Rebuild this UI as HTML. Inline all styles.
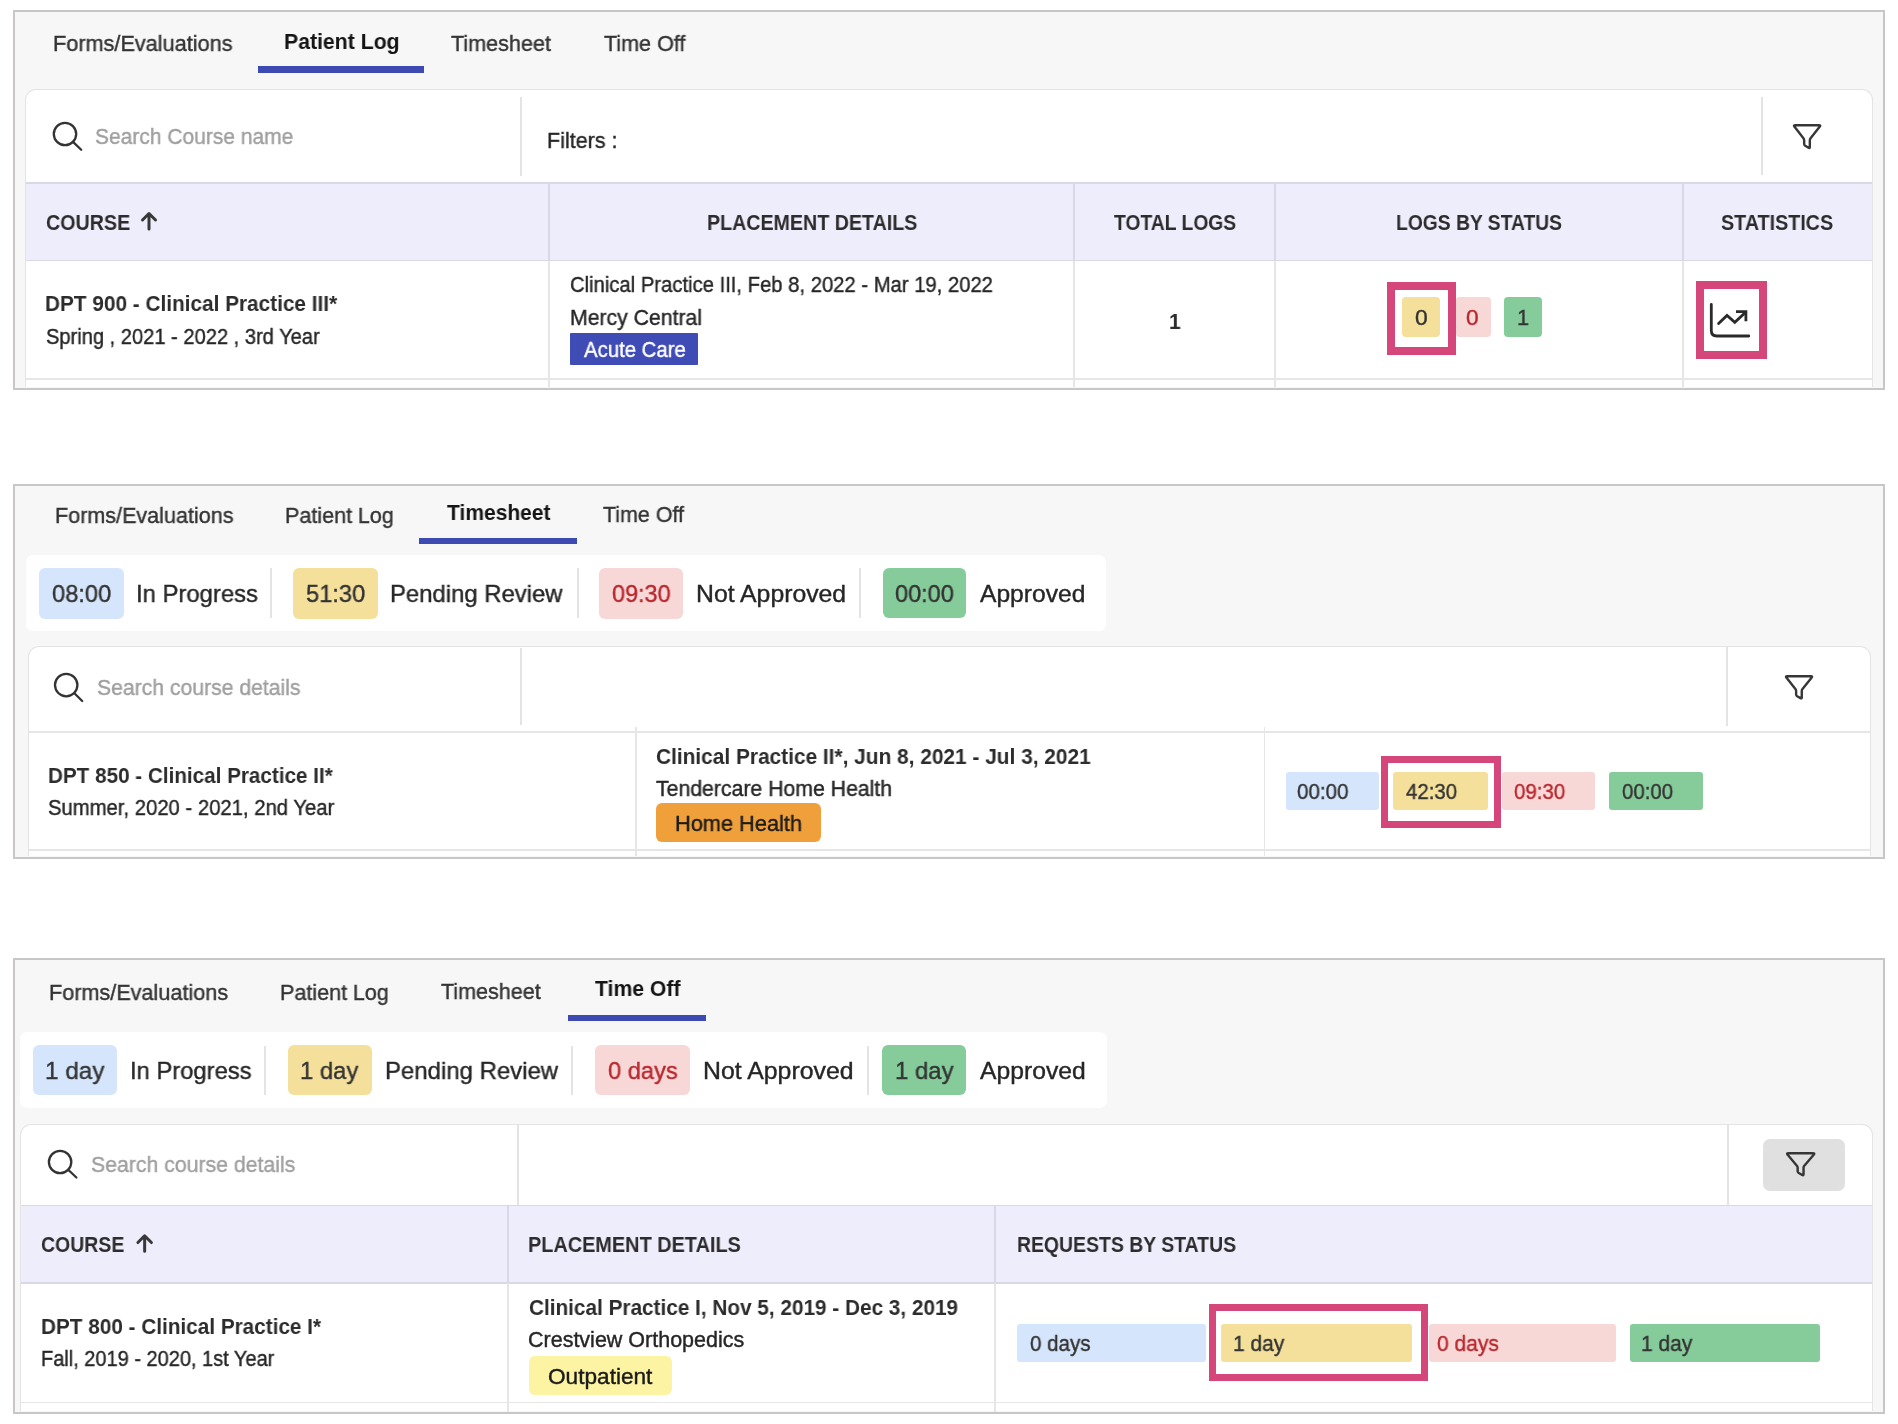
<!DOCTYPE html>
<html><head><meta charset="utf-8">
<style>
html,body{margin:0;padding:0;background:#ffffff;width:1898px;height:1424px;overflow:hidden;position:relative;}
body{font-family:"Liberation Sans",sans-serif;}
.a{position:absolute;box-sizing:border-box;}
.t{position:absolute;white-space:nowrap;line-height:1;transform-origin:0 0;-webkit-text-stroke:0.4px currentColor;will-change:transform;font-family:"Liberation Sans",sans-serif;}
.b{font-weight:700;-webkit-text-stroke:0;}
svg{position:absolute;overflow:visible;}
</style></head><body>
<div class="a" style="left:13.20px;top:10.00px;width:1871.80px;height:379.50px;background:#f7f7f7;border:2.5px solid #c8c6c7"></div>
<div class="a" style="left:258.00px;top:66.00px;width:166.00px;height:6.50px;background:#3d4ab2"></div>
<div class="a" style="left:25.30px;top:89.30px;width:1847.70px;height:297.70px;background:#fff;border:1.5px solid #e4e4e4;border-bottom:none;border-radius:11px 11px 0 0"></div>
<div class="a" style="left:519.50px;top:96.50px;width:2.00px;height:79.00px;background:#e4e4e4"></div>
<div class="a" style="left:1761.00px;top:97.00px;width:2.00px;height:78.00px;background:#e4e4e4"></div>
<svg style="left:0;top:0" width="1" height="1"><circle cx="65.00" cy="134.00" r="11.20" fill="none" stroke="#333" stroke-width="2.30"/><line x1="73.01" y1="141.83" x2="81.20" y2="149.80" stroke="#333" stroke-width="2.30" stroke-linecap="round"/></svg>
<svg style="left:1792.20px;top:124.30px" width="30" height="26" viewBox="0 0 30 26"><g transform="scale(1.0486 1.0040)"><path d="M3.25,1.25 H25.55 Q27.8,1.25 26.34,2.84 L17.7,14.2 Q17.0,15.1 17.0,16.3 V22.9 Q17.0,24.4 15.8,23.6 L12.6,21.6 Q11.6,20.9 11.6,19.8 V16.3 Q11.6,15.1 10.9,14.2 L2.45,2.85 Q1.0,1.25 3.25,1.25 Z" fill="none" stroke="#363636" stroke-width="2.40" stroke-linejoin="round" vector-effect="non-scaling-stroke"/></g></svg>
<div class="a" style="left:26.30px;top:183.00px;width:1845.50px;height:77.50px;background:#eeedfc"></div>
<div class="a" style="left:26.30px;top:182.40px;width:1845.50px;height:1.60px;background:#d9d8e6"></div>
<div class="a" style="left:26.30px;top:259.70px;width:1845.50px;height:1.60px;background:#d9d8e6"></div>
<div class="a" style="left:548.20px;top:183.20px;width:1.60px;height:77.30px;background:#d9d8e6"></div>
<div class="a" style="left:548.10px;top:260.50px;width:1.80px;height:126.50px;background:#e6e6e6"></div>
<div class="a" style="left:1073.00px;top:183.20px;width:1.60px;height:77.30px;background:#d9d8e6"></div>
<div class="a" style="left:1072.90px;top:260.50px;width:1.80px;height:126.50px;background:#e6e6e6"></div>
<div class="a" style="left:1274.20px;top:183.20px;width:1.60px;height:77.30px;background:#d9d8e6"></div>
<div class="a" style="left:1274.10px;top:260.50px;width:1.80px;height:126.50px;background:#e6e6e6"></div>
<div class="a" style="left:1682.00px;top:183.20px;width:1.60px;height:77.30px;background:#d9d8e6"></div>
<div class="a" style="left:1681.90px;top:260.50px;width:1.80px;height:126.50px;background:#e6e6e6"></div>
<div class="a" style="left:26.30px;top:378.10px;width:1845.50px;height:1.80px;background:#e6e6e6"></div>
<svg style="left:0;top:0" width="1" height="1"><path d="M149.00 228.90 V214.50 M142.50 220.00 L149.00 213.50 L155.50 220.00" fill="none" stroke="#383838" stroke-width="3.00" stroke-linecap="round" stroke-linejoin="round"/></svg>
<div class="a" style="left:570.00px;top:332.70px;width:127.80px;height:32.00px;background:#3f4cb6;border-radius:1px"></div>
<div class="a" style="left:1402.00px;top:297.20px;width:37.80px;height:39.40px;background:#f5e09b;border-radius:4px"></div>
<div class="a" style="left:1455.90px;top:297.20px;width:35.10px;height:39.40px;background:#f8d7d7;border-radius:4px"></div>
<div class="a" style="left:1504.40px;top:297.20px;width:37.90px;height:39.40px;background:#86cc9a;border-radius:4px"></div>
<div class="a" style="left:1387.40px;top:281.60px;width:68.20px;height:73.20px;border:8.00px solid #d5467a"></div>
<div class="a" style="left:1696.00px;top:280.90px;width:70.70px;height:77.90px;border:8.00px solid #d5467a"></div>
<svg style="left:0;top:0" width="1" height="1"><path d="M1711.3 304.5 V330.5 Q1711.3 336 1716.8 336 H1748.8" fill="none" stroke="#2a2a2a" stroke-width="2.8" stroke-linecap="round"/><path d="M1718.6 323.6 L1727 315.4 L1734.8 322.3 L1745.6 312.2" fill="none" stroke="#2a2a2a" stroke-width="2.8" stroke-linecap="round" stroke-linejoin="miter"/><path d="M1736 311.6 H1745.9 V321.3" fill="none" stroke="#2a2a2a" stroke-width="2.8" stroke-linecap="butt"/></svg>
<div class="a" style="left:13.20px;top:484.00px;width:1871.80px;height:374.50px;background:#f7f7f7;border:2.5px solid #c8c6c7"></div>
<div class="a" style="left:419.00px;top:537.50px;width:157.60px;height:6.50px;background:#3d4ab2"></div>
<div class="a" style="left:26.30px;top:554.50px;width:1080.10px;height:76.90px;background:#ffffff;border-radius:7px"></div>
<div class="a" style="left:39.40px;top:567.80px;width:84.50px;height:51.00px;background:#d5e5fb;border-radius:6px"></div>
<div class="a" style="left:293.30px;top:567.80px;width:84.60px;height:51.00px;background:#f5e09b;border-radius:6px"></div>
<div class="a" style="left:599.30px;top:567.80px;width:84.10px;height:51.00px;background:#f8d7d7;border-radius:6px"></div>
<div class="a" style="left:882.60px;top:568.30px;width:83.40px;height:50.00px;background:#86cc9a;border-radius:6px"></div>
<div class="a" style="left:270.40px;top:568.00px;width:2.00px;height:50.30px;background:#e4e4e4"></div>
<div class="a" style="left:576.60px;top:568.00px;width:2.00px;height:50.30px;background:#e4e4e4"></div>
<div class="a" style="left:858.90px;top:568.00px;width:2.00px;height:50.30px;background:#e4e4e4"></div>
<div class="a" style="left:27.50px;top:646.30px;width:1843.80px;height:209.70px;background:#fff;border:1.5px solid #e4e4e4;border-bottom:none;border-radius:11px 11px 0 0"></div>
<div class="a" style="left:519.80px;top:648.00px;width:2.00px;height:77.00px;background:#e4e4e4"></div>
<div class="a" style="left:1726.30px;top:647.00px;width:2.00px;height:79.00px;background:#e4e4e4"></div>
<svg style="left:0;top:0" width="1" height="1"><circle cx="66.20" cy="685.10" r="11.20" fill="none" stroke="#333" stroke-width="2.30"/><line x1="74.14" y1="693.00" x2="82.20" y2="701.00" stroke="#333" stroke-width="2.30" stroke-linecap="round"/></svg>
<svg style="left:1784.20px;top:674.90px" width="30" height="26" viewBox="0 0 30 26"><g transform="scale(1.0451 0.9800)"><path d="M3.25,1.25 H25.55 Q27.8,1.25 26.34,2.84 L17.7,14.2 Q17.0,15.1 17.0,16.3 V22.9 Q17.0,24.4 15.8,23.6 L12.6,21.6 Q11.6,20.9 11.6,19.8 V16.3 Q11.6,15.1 10.9,14.2 L2.45,2.85 Q1.0,1.25 3.25,1.25 Z" fill="none" stroke="#363636" stroke-width="2.40" stroke-linejoin="round" vector-effect="non-scaling-stroke"/></g></svg>
<div class="a" style="left:28.50px;top:730.80px;width:1842.00px;height:1.80px;background:#e6e6e6"></div>
<div class="a" style="left:634.90px;top:726.50px;width:1.80px;height:129.50px;background:#e6e6e6"></div>
<div class="a" style="left:1263.60px;top:726.50px;width:1.80px;height:129.50px;background:#e6e6e6"></div>
<div class="a" style="left:28.50px;top:849.10px;width:1842.00px;height:1.80px;background:#e6e6e6"></div>
<div class="a" style="left:656.40px;top:803.20px;width:164.30px;height:39.00px;background:#f0a03b;border-radius:6px"></div>
<div class="a" style="left:1285.60px;top:771.60px;width:93.20px;height:38.60px;background:#d5e5fb;border-radius:3px"></div>
<div class="a" style="left:1393.00px;top:771.60px;width:94.80px;height:38.60px;background:#f5e09b;border-radius:3px"></div>
<div class="a" style="left:1502.30px;top:771.60px;width:93.10px;height:38.60px;background:#f8d7d7;border-radius:3px"></div>
<div class="a" style="left:1609.00px;top:771.60px;width:94.10px;height:38.60px;background:#86cc9a;border-radius:3px"></div>
<div class="a" style="left:1380.80px;top:755.80px;width:120.20px;height:72.70px;border:7.60px solid #d5467a"></div>
<div class="a" style="left:13.20px;top:957.50px;width:1871.80px;height:456.30px;background:#f7f7f7;border:2.5px solid #c8c6c7"></div>
<div class="a" style="left:567.50px;top:1014.60px;width:138.10px;height:6.20px;background:#3d4ab2"></div>
<div class="a" style="left:20.30px;top:1032.20px;width:1086.60px;height:76.30px;background:#ffffff;border-radius:7px"></div>
<div class="a" style="left:32.90px;top:1045.30px;width:84.30px;height:50.10px;background:#d5e5fb;border-radius:6px"></div>
<div class="a" style="left:288.30px;top:1045.30px;width:83.90px;height:50.10px;background:#f5e09b;border-radius:6px"></div>
<div class="a" style="left:595.00px;top:1045.30px;width:95.30px;height:50.10px;background:#f8d7d7;border-radius:6px"></div>
<div class="a" style="left:882.10px;top:1045.00px;width:83.90px;height:49.80px;background:#86cc9a;border-radius:6px"></div>
<div class="a" style="left:264.40px;top:1045.50px;width:2.00px;height:49.80px;background:#e4e4e4"></div>
<div class="a" style="left:571.30px;top:1045.50px;width:2.00px;height:49.80px;background:#e4e4e4"></div>
<div class="a" style="left:866.80px;top:1045.50px;width:2.00px;height:49.80px;background:#e4e4e4"></div>
<div class="a" style="left:20.00px;top:1123.80px;width:1852.50px;height:287.70px;background:#fff;border:1.5px solid #e4e4e4;border-bottom:none;border-radius:11px 11px 0 0"></div>
<div class="a" style="left:517.00px;top:1125.00px;width:2.00px;height:80.00px;background:#e4e4e4"></div>
<div class="a" style="left:1727.30px;top:1124.70px;width:2.00px;height:80.00px;background:#e4e4e4"></div>
<svg style="left:0;top:0" width="1" height="1"><circle cx="60.10" cy="1162.00" r="11.20" fill="none" stroke="#333" stroke-width="2.30"/><line x1="68.20" y1="1169.73" x2="76.40" y2="1177.50" stroke="#333" stroke-width="2.30" stroke-linecap="round"/></svg>
<div class="a" style="left:1763.00px;top:1138.70px;width:82.00px;height:52.00px;background:#e0e0e0;border-radius:7px"></div>
<svg style="left:1784.60px;top:1152.40px" width="30" height="26" viewBox="0 0 30 26"><g transform="scale(1.0903 0.9720)"><path d="M3.25,1.25 H25.55 Q27.8,1.25 26.34,2.84 L17.7,14.2 Q17.0,15.1 17.0,16.3 V22.9 Q17.0,24.4 15.8,23.6 L12.6,21.6 Q11.6,20.9 11.6,19.8 V16.3 Q11.6,15.1 10.9,14.2 L2.45,2.85 Q1.0,1.25 3.25,1.25 Z" fill="none" stroke="#363636" stroke-width="2.40" stroke-linejoin="round" vector-effect="non-scaling-stroke"/></g></svg>
<div class="a" style="left:21.00px;top:1205.50px;width:1850.50px;height:77.50px;background:#eeedfc"></div>
<div class="a" style="left:21.00px;top:1204.70px;width:1850.50px;height:1.60px;background:#d9d8e6"></div>
<div class="a" style="left:21.00px;top:1282.20px;width:1850.50px;height:1.60px;background:#d9d8e6"></div>
<div class="a" style="left:507.40px;top:1205.50px;width:1.60px;height:77.50px;background:#d9d8e6"></div>
<div class="a" style="left:507.30px;top:1283.00px;width:1.80px;height:128.50px;background:#e6e6e6"></div>
<div class="a" style="left:994.40px;top:1205.50px;width:1.60px;height:77.50px;background:#d9d8e6"></div>
<div class="a" style="left:994.30px;top:1283.00px;width:1.80px;height:128.50px;background:#e6e6e6"></div>
<div class="a" style="left:21.00px;top:1401.70px;width:1850.50px;height:1.80px;background:#e6e6e6"></div>
<svg style="left:0;top:0" width="1" height="1"><path d="M144.65 1251.20 V1236.80 M137.90 1242.55 L144.65 1235.80 L151.40 1242.55" fill="none" stroke="#383838" stroke-width="3.00" stroke-linecap="round" stroke-linejoin="round"/></svg>
<div class="a" style="left:528.50px;top:1355.60px;width:143.30px;height:39.50px;background:#fcf3a3;border-radius:6px"></div>
<div class="a" style="left:1017.00px;top:1323.60px;width:189.30px;height:38.70px;background:#d5e5fb;border-radius:3px"></div>
<div class="a" style="left:1221.20px;top:1323.60px;width:190.60px;height:38.70px;background:#f5e09b;border-radius:3px"></div>
<div class="a" style="left:1428.80px;top:1323.60px;width:187.10px;height:38.70px;background:#f8d7d7;border-radius:3px"></div>
<div class="a" style="left:1629.50px;top:1323.60px;width:190.10px;height:38.70px;background:#86cc9a;border-radius:3px"></div>
<div class="a" style="left:1209.00px;top:1304.20px;width:218.50px;height:77.10px;border:7.60px solid #d5467a"></div>
<div class="t" style="left:53.17px;top:33.2px;font-size:22px;color:#333333;transform:scaleX(0.9853);">Forms/Evaluations</div>
<div class="t b" style="left:284.22px;top:30.7px;font-size:22px;color:#141414;transform:scaleX(0.9650);">Patient Log</div>
<div class="t" style="left:450.77px;top:33.2px;font-size:22px;color:#333333;transform:scaleX(0.9814);">Timesheet</div>
<div class="t" style="left:603.57px;top:33.2px;font-size:22px;color:#333333;transform:scaleX(0.9791);">Time Off</div>
<div class="t" style="left:95.36px;top:126.08px;font-size:22.5px;color:#9f9f9f;transform:scaleX(0.9332);">Search Course name</div>
<div class="t" style="left:547.28px;top:129.88px;font-size:22.5px;color:#262626;transform:scaleX(0.9561);">Filters :</div>
<div class="t b" style="left:45.51px;top:212.93px;font-size:21.5px;color:#2c2c2c;transform:scaleX(0.9155);">COURSE</div>
<div class="t b" style="left:706.72px;top:212.93px;font-size:21.5px;color:#2c2c2c;transform:scaleX(0.9139);">PLACEMENT DETAILS</div>
<div class="t b" style="left:1113.81px;top:212.93px;font-size:21.5px;color:#2c2c2c;transform:scaleX(0.8971);">TOTAL LOGS</div>
<div class="t b" style="left:1395.75px;top:212.93px;font-size:21.5px;color:#2c2c2c;transform:scaleX(0.8966);">LOGS BY STATUS</div>
<div class="t b" style="left:1721.21px;top:212.93px;font-size:21.5px;color:#2c2c2c;transform:scaleX(0.9173);">STATISTICS</div>
<div class="t b" style="left:45.45px;top:294.33px;font-size:21.5px;color:#2c2c2c;transform:scaleX(0.9663);">DPT 900 - Clinical Practice III*</div>
<div class="t" style="left:45.9px;top:326.83px;font-size:21.5px;color:#262626;transform:scaleX(0.9346);">Spring , 2021 - 2022 , 3rd Year</div>
<div class="t" style="left:570.29px;top:274.73px;font-size:21.5px;color:#262626;transform:scaleX(0.9413);">Clinical Practice III, Feb 8, 2022 - Mar 19, 2022</div>
<div class="t" style="left:569.6px;top:307.93px;font-size:21.5px;color:#262626;transform:scaleX(0.9866);">Mercy Central</div>
<div class="t" style="left:584px;top:339.1px;font-size:22px;color:#ffffff;transform:scaleX(0.9253);">Acute Care</div>
<div class="t b" style="left:1168.75px;top:311.53px;font-size:21.5px;color:#2c2c2c;transform:scaleX(0.9698);">1</div>
<div class="t" style="left:1415px;top:306.9px;font-size:22px;color:#333;transform:scaleX(1.0403);">0</div>
<div class="t" style="left:1465.91px;top:306.9px;font-size:22px;color:#b8292f;transform:scaleX(1.0309);">0</div>
<div class="t" style="left:1516.98px;top:306.9px;font-size:22px;color:#333;transform:scaleX(0.9822);">1</div>
<div class="t" style="left:55.18px;top:504.8px;font-size:22px;color:#333333;transform:scaleX(0.9797);">Forms/Evaluations</div>
<div class="t" style="left:284.88px;top:504.8px;font-size:22px;color:#333333;transform:scaleX(0.9778);">Patient Log</div>
<div class="t b" style="left:446.59px;top:501.7px;font-size:22px;color:#141414;transform:scaleX(0.9553);">Timesheet</div>
<div class="t" style="left:602.97px;top:504.3px;font-size:22px;color:#333333;transform:scaleX(0.9742);">Time Off</div>
<div class="t" style="left:51.87px;top:582.27px;font-size:24.5px;color:#333;transform:scaleX(0.9653);">08:00</div>
<div class="t" style="left:135.85px;top:582.27px;font-size:24.5px;color:#262626;transform:scaleX(0.9737);">In Progress</div>
<div class="t" style="left:305.65px;top:582.27px;font-size:24.5px;color:#333;transform:scaleX(0.9656);">51:30</div>
<div class="t" style="left:390.19px;top:582.27px;font-size:24.5px;color:#262626;transform:scaleX(0.9745);">Pending Review</div>
<div class="t" style="left:611.98px;top:582.27px;font-size:24.5px;color:#b8292f;transform:scaleX(0.9552);">09:30</div>
<div class="t" style="left:695.92px;top:582.27px;font-size:24.5px;color:#262626;transform:scaleX(1.0113);">Not Approved</div>
<div class="t" style="left:894.88px;top:582.27px;font-size:24.5px;color:#333;transform:scaleX(0.9586);">00:00</div>
<div class="t" style="left:980.4px;top:582.27px;font-size:24.5px;color:#262626;transform:scaleX(1.0041);">Approved</div>
<div class="t" style="left:97.05px;top:676.77px;font-size:22.5px;color:#9f9f9f;transform:scaleX(0.9410);">Search course details</div>
<div class="t b" style="left:47.56px;top:765.52px;font-size:21.5px;color:#2c2c2c;transform:scaleX(0.9608);">DPT 850 - Clinical Practice II*</div>
<div class="t" style="left:47.99px;top:798.12px;font-size:21.5px;color:#262626;transform:scaleX(0.9430);">Summer, 2020 - 2021, 2nd Year</div>
<div class="t b" style="left:656.07px;top:746.52px;font-size:21.5px;color:#2c2c2c;transform:scaleX(0.9699);">Clinical Practice II*, Jun 8, 2021 - Jul 3, 2021</div>
<div class="t" style="left:656.48px;top:778.62px;font-size:21.5px;color:#262626;transform:scaleX(0.9879);">Tendercare Home Health</div>
<div class="t" style="left:674.86px;top:813px;font-size:22px;color:#1a1a1a;transform:scaleX(0.9889);">Home Health</div>
<div class="t" style="left:1297.28px;top:781.4px;font-size:22px;color:#333;transform:scaleX(0.9367);">00:00</div>
<div class="t" style="left:1405.59px;top:781.4px;font-size:22px;color:#333;transform:scaleX(0.9291);">42:30</div>
<div class="t" style="left:1514.08px;top:781.4px;font-size:22px;color:#b8292f;transform:scaleX(0.9310);">09:30</div>
<div class="t" style="left:1622.08px;top:781.4px;font-size:22px;color:#333;transform:scaleX(0.9292);">00:00</div>
<div class="t" style="left:48.87px;top:981.5px;font-size:22px;color:#333333;transform:scaleX(0.9830);">Forms/Evaluations</div>
<div class="t" style="left:280.28px;top:981.5px;font-size:22px;color:#333333;transform:scaleX(0.9778);">Patient Log</div>
<div class="t" style="left:441.07px;top:981.4px;font-size:22px;color:#333333;transform:scaleX(0.9794);">Timesheet</div>
<div class="t b" style="left:594.79px;top:977.6px;font-size:22px;color:#141414;transform:scaleX(0.9622);">Time Off</div>
<div class="t" style="left:45.18px;top:1059.47px;font-size:24.5px;color:#333;transform:scaleX(0.9915);">1 day</div>
<div class="t" style="left:129.86px;top:1059.47px;font-size:24.5px;color:#262626;transform:scaleX(0.9704);">In Progress</div>
<div class="t" style="left:300.21px;top:1059.47px;font-size:24.5px;color:#333;transform:scaleX(0.9725);">1 day</div>
<div class="t" style="left:384.98px;top:1059.47px;font-size:24.5px;color:#262626;transform:scaleX(0.9780);">Pending Review</div>
<div class="t" style="left:607.77px;top:1059.47px;font-size:24.5px;color:#b8292f;transform:scaleX(0.9650);">0 days</div>
<div class="t" style="left:702.71px;top:1059.47px;font-size:24.5px;color:#262626;transform:scaleX(1.0140);">Not Approved</div>
<div class="t" style="left:894.81px;top:1059.47px;font-size:24.5px;color:#333;transform:scaleX(0.9760);">1 day</div>
<div class="t" style="left:980.4px;top:1059.47px;font-size:24.5px;color:#262626;transform:scaleX(1.0079);">Approved</div>
<div class="t" style="left:90.84px;top:1154.47px;font-size:22.5px;color:#9f9f9f;transform:scaleX(0.9447);">Search course details</div>
<div class="t b" style="left:41.22px;top:1235.22px;font-size:21.5px;color:#2c2c2c;transform:scaleX(0.9056);">COURSE</div>
<div class="t b" style="left:528.41px;top:1235.22px;font-size:21.5px;color:#2c2c2c;transform:scaleX(0.9248);">PLACEMENT DETAILS</div>
<div class="t b" style="left:1017.04px;top:1235.22px;font-size:21.5px;color:#2c2c2c;transform:scaleX(0.9032);">REQUESTS BY STATUS</div>
<div class="t b" style="left:40.85px;top:1316.92px;font-size:21.5px;color:#2c2c2c;transform:scaleX(0.9644);">DPT 800 - Clinical Practice I*</div>
<div class="t" style="left:40.6px;top:1349.32px;font-size:21.5px;color:#262626;transform:scaleX(0.9294);">Fall, 2019 - 2020, 1st Year</div>
<div class="t b" style="left:528.67px;top:1297.52px;font-size:21.5px;color:#2c2c2c;transform:scaleX(0.9651);">Clinical Practice I, Nov 5, 2019 - Dec 3, 2019</div>
<div class="t" style="left:528.43px;top:1329.72px;font-size:21.5px;color:#262626;">Crestview Orthopedics</div>
<div class="t" style="left:547.68px;top:1366.1px;font-size:22px;color:#1a1a1a;transform:scaleX(1.0283);">Outpatient</div>
<div class="t" style="left:1030.08px;top:1332.6px;font-size:22px;color:#333;transform:scaleX(0.9355);">0 days</div>
<div class="t" style="left:1233.12px;top:1332.6px;font-size:22px;color:#333;transform:scaleX(0.9546);">1 day</div>
<div class="t" style="left:1437.36px;top:1332.6px;font-size:22px;color:#b8292f;transform:scaleX(0.9561);">0 days</div>
<div class="t" style="left:1641.32px;top:1332.6px;font-size:22px;color:#333;transform:scaleX(0.9546);">1 day</div>
</body></html>
